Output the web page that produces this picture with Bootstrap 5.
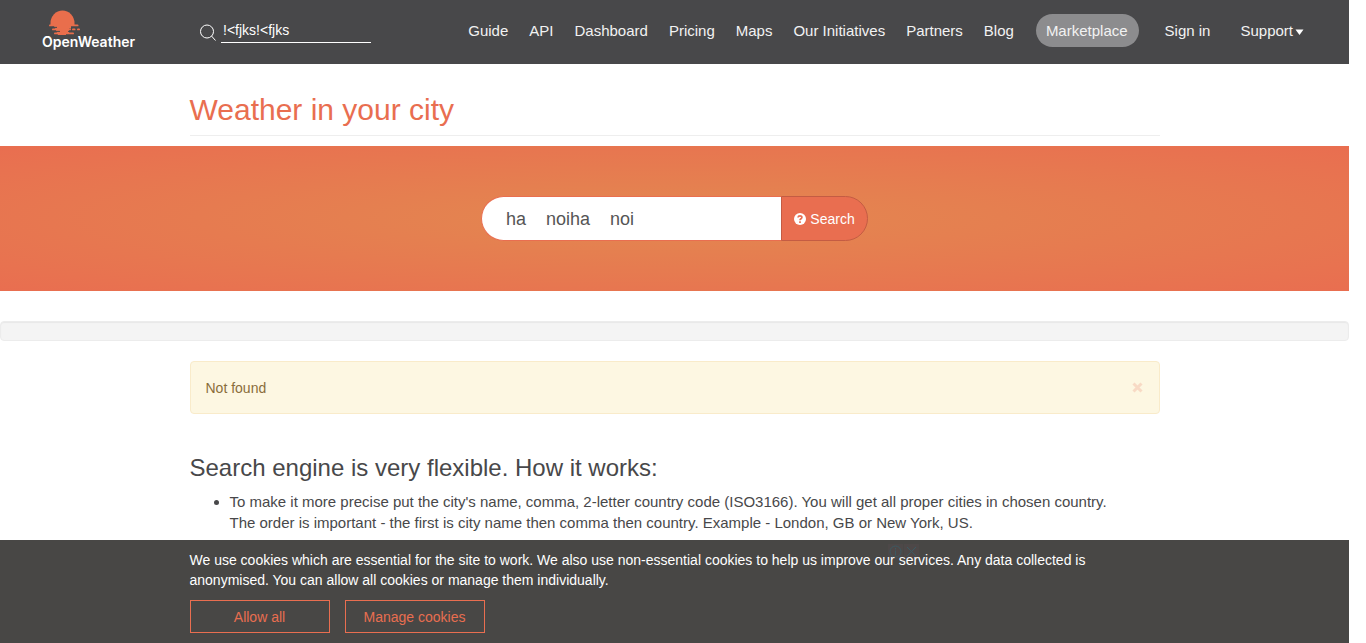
<!DOCTYPE html>
<html lang="en">
<head>
<meta charset="utf-8">
<meta name="viewport" content="width=device-width, initial-scale=1">
<title>Weather in your city - OpenWeather</title>
<link href="https://cdn.jsdelivr.net/npm/bootstrap@5.3.0/dist/css/bootstrap.min.css" rel="stylesheet">
<style>
:root{--ow-orange:#e96e50;--ow-dark:#48484a;--ow-gutter:17px}
body{font-family:"Liberation Sans",Arial,sans-serif;font-size:14px;line-height:20px;color:#48484a;padding-right:var(--ow-gutter);background:#fff}
.page-wrap{max-width:1000px;padding:0 15px}
.top-bar{background:var(--ow-dark);height:64px;padding:0 45px 0 42px}
.brand-logo{width:96px;text-decoration:none;color:#fff}
.brand-logo svg{display:block}
.brand-name{font:600 14px/16px "Inter",sans-serif;fill:#fff}
.mini-search{margin-left:62px}
.mini-search input{width:150px;height:22px;margin-left:5px;padding:0 2px 3px;border:0;border-bottom:1px solid #fff;background:none;color:#fff;font-size:14px;outline:0}
.site-menu{gap:21px;font-size:15px;line-height:33px;margin-bottom:3px}
.site-menu a{color:#f2f2f2;text-decoration:none;white-space:nowrap}
.site-menu .market{background:#8c8c8e;border-radius:17px;padding:0 11px 0 10px;margin-left:1px;display:block}
.site-menu .sign{margin-left:5px;margin-right:9px}
.caret{width:9px;height:6px;margin-left:2px}
h1{font-size:30px;line-height:33px;color:var(--ow-orange);font-weight:400;padding:29px 0 9px;margin:0 0 10px;border-bottom:1px solid #eee}
.search-band{padding:50px 0;background:radial-gradient(ellipse at center,#e38850 0%,#e96e50 100%)}
.search-city input{width:300px;height:45px;border:1px solid var(--ow-orange);border-right:0;border-radius:23px 0 0 23px;padding:1px 24px 0;font-size:18px;color:#555;outline:0}
.search-city button{width:87px;height:45px;border:1px solid #c45c43;border-radius:0 23px 23px 0;background:var(--ow-orange);color:#fff;gap:4px;padding:0}
.well-bar{height:20px;margin:30px 0 20px;background:#f4f4f4;border:1px solid #ececec;border-radius:4px;box-shadow:inset 0 1px 1px rgba(0,0,0,.05)}
.not-found{background:#fdf7e2;border:1px solid #f9ebca;border-radius:4px;color:#8a6d3b;padding:15px;height:53px}
.not-found button{border:0;background:none;padding:0 1px;line-height:0}
h2{font-size:24px;line-height:26px;font-weight:400;margin:41px 0 10px}
.tips{font-size:15px;line-height:21px;padding-left:40px;margin:0}
.cookie-bar{background:#484745;color:#fff;right:var(--ow-gutter);padding:10px 0}
.cookie-bar p{margin:0 0 10px}
.cookie-actions{gap:15px}
.cookie-bar button{width:140px;height:33px;border:1px solid var(--ow-orange);background:none;color:var(--ow-orange);padding:0}
.ad-mark{position:absolute;left:698px;top:-6px;z-index:-1}
</style>
</head>
<body>
<header class="top-bar d-flex align-items-center">
  <a href="#" class="brand-logo" aria-label="OpenWeather">
    <svg width="96" height="44" viewBox="0 0 96 44">
      <g fill="#e96e4c"><path d="M8.500 16V13a12 12.500 0 0 1 24 0v3z"/>
      <rect x="7" y="14.500" width="29.500" height="1.800" rx=".9"/><path d="M12 16h17v2.500h-5V25H16z"/><rect x="10" y="18.500" width="15" height="1.800" rx=".9"/><rect x="24" y="18.500" width="5" height="1.800" rx=".9"/><rect x="30" y="18.500" width="3.500" height="1.800" rx=".9"/><rect x="35" y="18.500" width="3" height="1.800" rx=".9"/><rect x="15" y="18" width="12" height="6"/><rect x="12" y="22.500" width="20" height="1.800" rx=".9"/></g>
      <path d="M10 17.400h5M13 21.400h5M26 21.400h4" stroke="#48484a" fill="none"/>
      <text class="brand-name" x="0" y="37">OpenWeather</text>
    </svg>
  </a>
  <form class="mini-search d-flex align-items-center">
    <svg width="16" height="17" viewBox="0 0 16 17" fill="none" stroke="#fff"><circle cx="7" cy="7.500" r="6.500"/><path d="M11.500 12l4 4.500"/></svg>
    <input type="text" aria-label="Search site" value="!&lt;fjks!&lt;fjks">
  </form>
  <nav class="ms-auto" aria-label="Main">
    <ul class="site-menu list-unstyled d-flex">
      <li><a href="#">Guide</a></li><li><a href="#">API</a></li><li><a href="#">Dashboard</a></li><li><a href="#">Pricing</a></li><li><a href="#">Maps</a></li><li><a href="#">Our Initiatives</a></li><li><a href="#">Partners</a></li><li><a href="#">Blog</a></li>
      <li><a href="#" class="market">Marketplace</a></li>
      <li class="sign"><a href="#">Sign in</a></li>
      <li><a href="#">Support<svg class="caret" viewBox="0 0 9 6"><path d="M.5.5h8L4.500 6z" fill="#fff"/></svg></a></li>
    </ul>
  </nav>
</header>
<main>
  <div class="page-wrap mx-auto"><h1>Weather in your city</h1></div>
  <section class="search-band">
    <form class="search-city d-flex justify-content-center">
      <input type="text" aria-label="City name" value="ha    noiha    noi">
      <button type="button" class="d-flex align-items-center justify-content-center">
        <svg width="12" height="12" viewBox="0 0 12 12"><circle cx="6" cy="6" r="6" fill="#fff"/><path d="M4 4.500C4.200 2.300 8 2.300 7.900 4.500 7.800 5.800 6 5.800 6 7.200M6 8.200v1.700" stroke="#e96e50" stroke-width="1.700" fill="none"/></svg>
        <span>Search</span>
      </button>
    </form>
  </section>
  <div class="well-bar"></div>
  <div class="page-wrap mx-auto">
    <div class="not-found d-flex align-items-center justify-content-between" role="alert">
      <span>Not found</span>
      <button type="button" aria-label="Close"><svg width="11" height="11" viewBox="0 0 11 11"><path d="M1.500 1.500l8 8M9.500 1.500l-8 8" stroke="#f8dac5" stroke-width="3"/></svg></button>
    </div>
    <h2>Search engine is very flexible. How it works:</h2>
    <ul class="tips">
      <li>To make it more precise put the city's name, comma, 2-letter country code (ISO3166). You will get all proper cities in chosen country.<br>The order is important - the first is city name then comma then country. Example - London, GB or New York, US.</li>
    </ul>
  </div>
</main>
<div class="cookie-bar fixed-bottom">
  <div class="page-wrap mx-auto">
    <div class="position-relative">
      <svg class="ad-mark" width="31" height="15" viewBox="0 0 31 15" fill="none"><path fill="#4d4848" d="M0 0h15v15H0zM16 0h15v15H16z"/><g stroke="#3c5a62"><circle cx="7.500" cy="7.500" r="5.500"/><path d="M7.500 4v1.500M7.500 6.500v5M19 3l9 9M28 3l-9 9"/></g></svg>
      <p>We use cookies which are essential for the site to work. We also use non-essential cookies to help us improve our services. Any data collected is anonymised. You can allow all cookies or manage them individually.</p>
    </div>
    <div class="cookie-actions d-flex"><button type="button">Allow all</button><button type="button">Manage cookies</button></div>
  </div>
</div>
<script src="https://cdn.jsdelivr.net/npm/bootstrap@5.3.0/dist/js/bootstrap.bundle.min.js"></script>
</body>
</html>
